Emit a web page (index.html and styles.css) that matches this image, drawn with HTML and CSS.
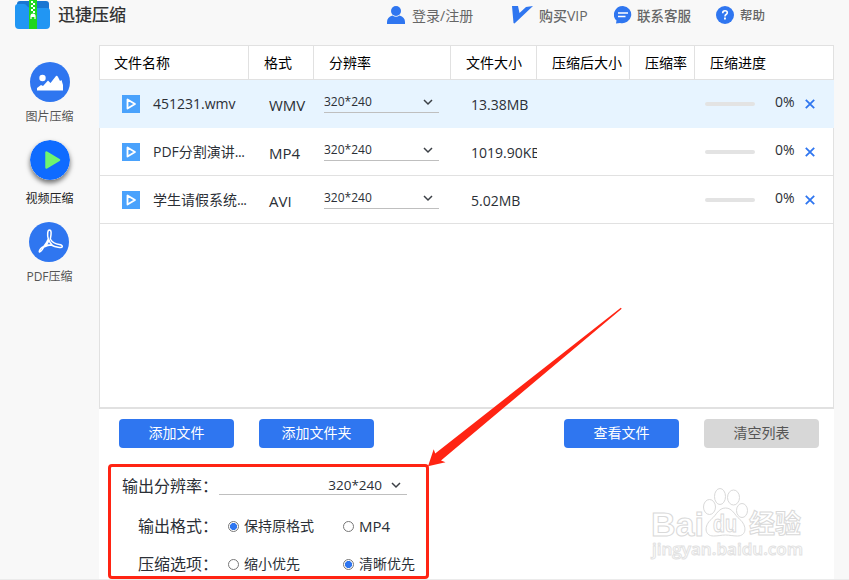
FILE: index.html
```html
<!DOCTYPE html>
<html lang="zh-CN">

<head>
    <meta charset="UTF-8">
    <meta name="viewport" content="width=device-width, initial-scale=1.0">
    <title>迅捷压缩</title>
    <link rel="stylesheet" href="styles.css">
</head>

<body>
    <div class="app">
        <header class="topbar">
            <svg class="logo" width="35" height="29" viewBox="0 0 35 29">
                <path d="M2 6V4q0-3 3-3h26q3 0 3 3v8H2z" fill="#1976d2"/>
                <path d="M0 7q0-3 3-3h6q2 0 3 2l1 1q1 1 3 1h16q3 0 3 3v14q0 4-4 4H4q-4 0-4-4z" fill="#2196f3"/>
                <path d="M14 0h8v29h-8z" fill="#1fd61f"/>
                <path d="M16 1h2v2h-2zM18 3h2v2h-2zM16 5h2v2h-2zM18 7h2v2h-2zM16 9h2v2h-2zM18 11h2v2h-2z" fill="#fff"/>
                <path d="M18 13.5q2.600 0 2.600 3V19h-1.200v-2h-2.800v2h-1.200v-2.500q0-3 2.600-3z" fill="#fff"/>
            </svg>
            <h1 class="brand">迅捷压缩</h1>

            <a class="link login">
                <svg width="18" height="18" viewBox="0 0 18 18" fill="#2f76f0">
                    <ellipse cx="9" cy="5" rx="5" ry="5"/>
                    <path d="M0 18v-2q0-5 5.500-6.500Q9 12 12.500 9.500 18 11 18 16v2z"/>
                </svg>
                <span>登录/注册</span>
            </a>
            <a class="link vip">
                <svg width="21" height="18" viewBox="0 0 21 18" fill="#2f76f0">
                    <path d="M0 0h6l1.500 7L14 1l7-1L2.500 17.500 1.500 17z"/>
                </svg>
                <span>购买VIP</span>
            </a>
            <a class="link service">
                <svg width="18" height="18" viewBox="0 0 18 18">
                    <path d="M9 0a9 8.600 0 1 1-3 16.900L2 17.600l.5-3A9 8.600 0 0 1 9 0z" fill="#2f76f0"/>
                    <path d="M4 7h10M4 10.500h7.500" stroke="#fff" stroke-width="1.500"/>
                </svg>
                <span>联系客服</span>
            </a>
            <a class="link help">
                <svg width="18" height="18" viewBox="0 0 18 18">
                    <circle cx="9" cy="9" r="9" fill="#2f76f0"/>
                    <path d="M6.700 7.200q0-2.500 2.300-2.500t2.300 2q0 1-1.200 1.800-1.100.7-1.100 1.900" fill="none" stroke="#fff" stroke-width="1.600"/>
                    <path d="M8 11.500h1.900v1.900H8z" fill="#fff"/>
                </svg>
                <span>帮助</span>
            </a>
        </header>

        <div class="main">
            <nav class="sidebar">
                <a class="tool image">
                    <svg width="40" height="40" viewBox="0 0 40 40">
                        <circle cx="20" cy="20" r="20" fill="#2f76f0"/>
                        <circle cx="12.500" cy="16" r="3.200" fill="#fff"/>
                        <path d="M7 28.500V26l4-3 2 1 5-5.500 2.500 2.500L26 14q1-1 2 1l2 4 1.500-1L33 23v5.500z" fill="#fff"/>
                    </svg>
                    <span>图片压缩</span>
                </a>
                <a class="tool video">
                    <svg class="active-icon" width="40" height="40" viewBox="0 0 40 40">
                        <circle cx="20" cy="20" r="20" fill="#0f6bff"/>
                        <path d="M16.500 12.500v15L29 20z" fill="#6ff56f" stroke="#6ff56f" stroke-width="2.500" stroke-linejoin="round"/>
                    </svg>
                    <span>视频压缩</span>
                </a>
                <a class="tool pdf">
                    <svg width="40" height="40" viewBox="0 0 40 40">
                        <circle cx="20" cy="20" r="20" fill="#2f76f0"/>
                        <path d="M20.500 8c2 0 2 3.500.8 9 2 3.500 4.500 5 9 5.500 4 .5 4 3.500 0 3-3-.4-6-1.200-8-2.500-3 0-5 .8-7.500 2-2 4-4.500 6-4.500 4.500 0-1.500 2-4 4.500-5 2.200-2.800 3.500-4.500 4.500-7.500-1.200-4.500-.8-9 1.200-9zM20 18c-.8 2.500-1.800 4-3.500 6 2-.8 4-1.200 6.500-1.200-1.500-1.500-2.500-2.500-3-4.800z" fill="none" stroke="#fff" stroke-width="1.500" stroke-linejoin="round"/>
                    </svg>
                    <span>PDF压缩</span>
                </a>
            </nav>

            <main class="content">
                <section class="table">
                    <div class="thead">
                        <div>文件名称</div>
                        <div>格式</div>
                        <div>分辨率</div>
                        <div>文件大小</div>
                        <div>压缩后大小</div>
                        <div>压缩率</div>
                        <div>压缩进度</div>
                    </div>
                    <div class="row selected">
                        <div class="name"><i class="file"><svg width="18" height="18" viewBox="0 0 18 18"><path d="M5.500 4.500v9l7.500-4.500z"/></svg></i>451231.wmv</div>
                        <div class="format">WMV</div>
                        <div class="res"><div class="select">320*240<svg width="10" height="7" viewBox="0 0 10 7"><path d="M1 1l4 4 4-4"/></svg></div></div>
                        <div class="size">13.38MB</div>
                        <div></div>
                        <div></div>
                        <div class="progress"><b class="bar"></b><span>0%</span><svg width="10" height="10" viewBox="0 0 10 10"><path d="M.8.800l8.400 8.400M9.200.8L.8 9.200"/></svg></div>
                    </div>
                    <div class="row">
                        <div class="name"><i class="file"><svg width="18" height="18" viewBox="0 0 18 18"><path d="M5.500 4.500v9l7.500-4.500z"/></svg></i>PDF分割演讲<span class="dots">...</span></div>
                        <div class="format">MP4</div>
                        <div class="res"><div class="select">320*240<svg width="10" height="7" viewBox="0 0 10 7"><path d="M1 1l4 4 4-4"/></svg></div></div>
                        <div class="size">1019.90KB</div>
                        <div></div>
                        <div></div>
                        <div class="progress"><b class="bar"></b><span>0%</span><svg width="10" height="10" viewBox="0 0 10 10"><path d="M.8.800l8.400 8.400M9.200.8L.8 9.200"/></svg></div>
                    </div>
                    <div class="row">
                        <div class="name"><i class="file"><svg width="18" height="18" viewBox="0 0 18 18"><path d="M5.500 4.500v9l7.500-4.500z"/></svg></i>学生请假系统<span class="dots">...</span></div>
                        <div class="format">AVI</div>
                        <div class="res"><div class="select">320*240<svg width="10" height="7" viewBox="0 0 10 7"><path d="M1 1l4 4 4-4"/></svg></div></div>
                        <div class="size">5.02MB</div>
                        <div></div>
                        <div></div>
                        <div class="progress"><b class="bar"></b><span>0%</span><svg width="10" height="10" viewBox="0 0 10 10"><path d="M.8.800l8.400 8.400M9.200.8L.8 9.200"/></svg></div>
                    </div>
                </section>

                <div class="buttons">
                    <button class="btn">添加文件</button>
                    <button class="btn">添加文件夹</button>
                    <button class="btn view">查看文件</button>
                    <button class="btn clear">清空列表</button>
                </div>

                <form class="options">
                    <div class="option first">
                        <span class="label">输出分辨率：</span>
                        <div class="out-select">320*240<svg width="10" height="7" viewBox="0 0 10 7"><path d="M1 1l4 4 4-4"/></svg></div>
                    </div>
                    <div class="option second">
                        <span class="label">输出格式：</span>
                        <label><input type="radio" name="format" checked>保持原格式</label>
                        <label class="mp4"><input type="radio" name="format">MP4</label>
                    </div>
                    <div class="option third">
                        <span class="label">压缩选项：</span>
                        <label><input type="radio" name="mode">缩小优先</label>
                        <label><input type="radio" name="mode" checked>清晰优先</label>
                    </div>
                </form>
            </main>
        </div>

        <!-- Watermark -->
        <svg class="watermark" width="170" height="80" viewBox="0 0 170 80">
            <g class="mark">
                <text class="bai" x="9" y="50" textLength="53" lengthAdjust="spacingAndGlyphs">Bai</text>
                <ellipse cx="67.500" cy="21" rx="6" ry="7.500"/>
                <ellipse cx="78" cy="10.500" rx="5.500" ry="8"/>
                <ellipse cx="91.500" cy="11.500" rx="6" ry="7.500"/>
                <ellipse cx="100" cy="24.500" rx="5.500" ry="7"/>
                <path d="M83.500 22c7 0 9 7 14 11 8 7 7 17-2 17-5 0-8-1-12-1s-7 1-12 1c-9 0-10-10-2-17 5-4 7-11 14-11z"/>
                <text class="du" x="71" y="46" textLength="24" lengthAdjust="spacingAndGlyphs">du</text>
                <text class="exp" x="107" y="47" textLength="52">经验</text>
                <text class="url" x="10" y="69" textLength="151" lengthAdjust="spacingAndGlyphs">jingyan.baidu.com</text>
            </g>
        </svg>

        <!-- Highlight box and arrow -->
        <div class="highlight"></div>
        <svg class="arrow" width="196" height="162" viewBox="0 0 196 162">
            <path d="M193.800 0.700l.9 1L14 153.500l4.500 1.800L1 159.200l5.700-17 1.500 4.300z" fill="#ff2413"/>
        </svg>
    </div>
</body>

</html>
```
FILE: styles.css
```css
* {
    box-sizing: border-box;
}

body {
    margin: 0;
    background-color: #f8f8f8;
    color: #2b2f36;
    font-family: 'Open Sans', 'Noto Sans CJK SC', sans-serif;
    font-size: 14px;
    line-height: 20px;
}

.app {
    position: relative;
    height: 580px;
    overflow: hidden;
    display: flex;
    flex-direction: column;
    border-bottom: 1px solid #ebebeb;
}

/* Top bar */
.topbar {
    display: flex;
    height: 45px;
    padding-left: 15px;
}

.brand {
    margin: 4px 0 0 8px;
    width: 329px;
    font-size: 17px;
    font-weight: 500;
    line-height: 22px;
    color: #333;
}

.link {
    display: flex;
    align-items: center;
    height: 30px;
    font-size: 13.5px;
    font-weight: 500;
    color: #666;
    white-space: nowrap;
}

.link span {
    padding-top: 1px;
}

.login {
    width: 125px;
    gap: 7px;
    font-size: 14px;
    font-weight: 400;
}

.vip {
    width: 102px;
    gap: 6px;
    font-size: 14px;
}

.service {
    width: 102px;
    gap: 5px;
}

.help {
    gap: 6px;
    font-size: 12.5px;
}

.main {
    display: flex;
    flex: 1;
}

/* Sidebar */
.sidebar {
    width: 99px;
    padding-top: 17px;
}

.tool {
    display: flex;
    flex-direction: column;
    align-items: center;
    font-size: 12px;
    color: #555;
}

.image {
    height: 78px;
    gap: 5px;
}

.video {
    height: 82px;
    gap: 9px;
    color: #222;
}

.pdf {
    gap: 5px;
}

.pdf svg {
    margin-right: 2px;
}

.active-icon {
    border-radius: 50%;
    box-shadow: 0 3px 5px rgba(0, 0, 0, 0.55);
}

/* File table */
.content {
    width: 735px;
    background-color: #fff;
}

.table {
    height: 364px;
    border: 1px solid #e1e1e1;
    border-bottom-width: 2px;
}

.thead,
.row {
    display: grid;
    grid-template-columns: 149px 65px 137px 86px 93px 65px 1fr;
}

.thead {
    height: 34px;
    border-bottom: 1px solid #e1e1e1;
    color: #000;
}

.thead div {
    padding: 7px 0 0 15px;
    border-right: 1px solid #e1e1e1;
    white-space: nowrap;
}

.thead div:first-child {
    padding-left: 14px;
}

.thead div:last-child {
    border-right: none;
}

.row {
    height: 48px;
    border-bottom: 1px solid #e1e1e1;
}

.selected {
    margin: 0 -1px;
    padding: 0 1px;
    background-color: #e7f4ff;
    border-bottom-color: #e7f4ff;
}

.name {
    display: flex;
    align-items: center;
    padding: 1px 0 0 22px;
    white-space: nowrap;
}

.dots {
    letter-spacing: -0.5px;
}

.file {
    display: block;
    width: 18px;
    height: 18px;
    margin-right: 13px;
    background-color: #4aa2fc;
}

.file svg {
    display: block;
    fill: none;
    stroke: #fff;
    stroke-width: 1.800;
    stroke-linejoin: round;
}

.format {
    padding: 15px 0 0 20px;
    font-size: 15px;
}

.res {
    padding: 12px 0 0 10px;
}

.select {
    display: flex;
    align-items: center;
    justify-content: space-between;
    width: 115px;
    height: 21px;
    padding: 0 6px 0 0;
    border-bottom: 1px solid #bfbfbf;
    font-size: 12px;
}

.select svg,
.out-select svg {
    fill: none;
    stroke: #3c4046;
    stroke-width: 1.500;
}

.size {
    padding: 15px 0 0 20px;
    overflow: hidden;
}

.progress {
    display: flex;
    align-items: center;
    padding-left: 10px;
}

.bar {
    width: 50px;
    height: 4px;
    border-radius: 2px;
    background-color: #e3e3e3;
}

.progress span {
    width: 20px;
    margin: 0 10px 4px 20px;
}

.progress svg {
    fill: none;
    stroke: #2f76f0;
    stroke-width: 1.800;
}

/* Buttons */
.buttons {
    display: flex;
    gap: 25px;
    padding: 10px 15px 0 20px;
}

.btn {
    width: 115px;
    height: 29px;
    padding: 0 0 2px;
    border: none;
    border-radius: 4px;
    background-color: #2f76f0;
    color: #fff;
    font: inherit;
}

.view {
    margin-left: auto;
}

.clear {
    background-color: #d7d7d7;
    color: #555;
}

/* Output options */
.options {
    padding-top: 25px;
}

.option {
    display: flex;
    align-items: center;
    height: 26px;
}

.first {
    margin-bottom: 14px;
}

.second {
    margin-bottom: 12px;
}

.label {
    width: 119px;
    margin-right: 1px;
    font-size: 16px;
    text-align: right;
}

.out-select {
    display: flex;
    align-items: center;
    justify-content: flex-end;
    gap: 9px;
    width: 188px;
    height: 19px;
    margin-bottom: 1px;
    padding-right: 6px;
    border-bottom: 1px solid #bfbfbf;
    font-size: 13.5px;
}

.option label {
    display: flex;
    align-items: center;
    width: 115px;
    white-space: nowrap;
}

.option .label + label {
    margin-left: 9px;
}

.option .mp4 {
    font-size: 15px;
}

.option input {
    appearance: none;
    width: 11px;
    height: 11px;
    margin: 0 5px 0 0;
    border: 1px solid #777;
    border-radius: 50%;
}

.option input:checked {
    background: radial-gradient(circle, #2f76f0 3.300px, #fff 3.800px);
}

.watermark {
    position: absolute;
    left: 642px;
    top: 486px;
}

.mark {
    fill: #fff;
    stroke: #d9d9d9;
    stroke-width: 1;
    font-family: 'Liberation Sans', 'Noto Sans CJK SC', sans-serif;
    font-weight: bold;
}

.bai {
    font-size: 34px;
}

.du {
    font-size: 23px;
}

.exp {
    font-family: 'Noto Sans CJK SC', sans-serif;
    font-size: 26px;
}

.url {
    font-family: 'Open Sans', sans-serif;
    font-size: 17px;
    font-weight: 600;
    stroke: #e2e2e2;
}

.highlight {
    position: absolute;
    left: 108px;
    top: 464px;
    width: 321px;
    height: 115px;
    border: 3px solid #ff2413;
    border-radius: 4px;
}

.arrow {
    position: absolute;
    left: 427px;
    top: 307px;
}
```
